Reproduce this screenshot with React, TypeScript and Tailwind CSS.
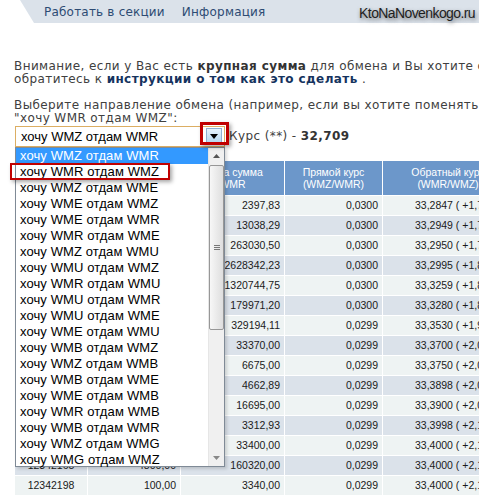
import React from "react";

const options: [string, string][] = [
  ["WMZ", "WMR"], ["WMR", "WMZ"], ["WMZ", "WME"], ["WME", "WMZ"], ["WME", "WMR"],
  ["WMR", "WME"], ["WMZ", "WMU"], ["WMU", "WMZ"], ["WMR", "WMU"], ["WMU", "WMR"],
  ["WMU", "WME"], ["WME", "WMU"], ["WMB", "WMZ"], ["WMZ", "WMB"], ["WMB", "WME"],
  ["WME", "WMB"], ["WMR", "WMB"], ["WMB", "WMR"], ["WMZ", "WMG"], ["WMG", "WMZ"],
];

const rows: string[][] = [
  ["12341587", "72,04", "2397,83", "0,0300", "33,2847 ( +1,76% )"],
  ["12341702", "391,60", "13038,29", "0,0300", "33,2949 ( +1,79% )"],
  ["12341734", "7900,00", "263030,50", "0,0300", "33,2950 ( +1,79% )"],
  ["12341790", "78930,39", "2628342,23", "0,0300", "33,2995 ( +1,80% )"],
  ["12341811", "39631,00", "1320744,75", "0,0300", "33,3259 ( +1,89% )"],
  ["12341856", "5400,00", "179971,20", "0,0300", "33,3280 ( +1,89% )"],
  ["12341903", "9870,00", "329194,11", "0,0299", "33,3530 ( +1,97% )"],
  ["12341955", "1000,00", "33370,00", "0,0299", "33,3700 ( +2,02% )"],
  ["12341987", "200,00", "6675,00", "0,0299", "33,3750 ( +2,04% )"],
  ["12342012", "139,65", "4662,89", "0,0299", "33,3898 ( +2,08% )"],
  ["12342046", "500,00", "16695,00", "0,0299", "33,3900 ( +2,08% )"],
  ["12342090", "99,19", "3312,93", "0,0299", "33,3998 ( +2,11% )"],
  ["12342131", "1000,00", "33400,00", "0,0299", "33,4000 ( +2,11% )"],
  ["12342165", "4800,00", "160320,00", "0,0299", "33,4000 ( +2,11% )"],
  ["12342198", "100,00", "3340,00", "0,0299", "33,4000 ( +2,11% )"],
];

const headers = [
  ["№", "заявки"],
  ["Сумма", "WMZ"],
  ["Ваша сумма", "WMR"],
  ["Прямой курс", "(WMZ/WMR)"],
  ["Обратный курс", "(WMR/WMZ)"],
];

export default function App() {
  return (
    <div className="relative w-[479px] h-[496px] overflow-hidden bg-white">
      {/* top navigation */}
      <div className="ml-[20px] h-[23px] bg-[#dbe2ea] [clip-path:polygon(0_0,100%_0,100%_100%,14px_100%)] flex items-center gap-[17px] pl-[24px] font-['DejaVu_Sans',sans-serif] text-[12px] tracking-[0.2px] text-[#2d4b73]">
        <span>Работать в секции</span>
        <span>Информация</span>
      </div>

      {/* watermark */}
      <div className="absolute top-[3px] right-[4px] font-['Liberation_Sans',sans-serif] text-[14px] tracking-[-0.6px] text-[#1e1e1e] [text-shadow:1px_2px_4px_rgba(0,0,0,0.55)]">
        KtoNaNovenkogo.ru
      </div>

      {/* text block */}
      <div className="mt-[37px] pl-[14px] font-['DejaVu_Sans',sans-serif] text-[12px] leading-[13px] tracking-[0.4px] text-[#404040]">
        <div className="whitespace-nowrap">
          Внимание, если у Вас есть <b className="text-[#333]">крупная сумма</b> для обмена и Вы хотите обменять её по лучшему курсу,
        </div>
        <div className="whitespace-nowrap">
          обратитесь к <b className="text-[#15335e]">инструкции о том как это сделать</b> .
        </div>
        <div className="mt-[13px] whitespace-nowrap">
          Выберите направление обмена (например, если вы хотите поменять к примеру WMR на WMZ, выберите
        </div>
        <div className="whitespace-nowrap">"хочу WMR отдам WMZ":</div>

        <div className="mt-[1px] flex items-center h-[21px]">
          <div className="ml-[1px] w-[210px] h-[21px] border border-[#dcae63] flex items-center justify-between pl-[5px] pr-[2px] font-['Liberation_Sans',sans-serif] text-[13px] tracking-normal text-black">
            <span>хочу WMZ отдам WMR</span>
            <div className="w-[16px] h-[17px] border border-[#8fb0d2] bg-gradient-to-b from-[#e6f3fc] to-[#b0d4ee] flex items-center justify-center">
              <svg width="8" height="5" viewBox="0 0 8 5">
                <path d="M0 0 L8 0 L4 5 Z" fill="#000" />
              </svg>
            </div>
          </div>
          <span className="ml-[4px] whitespace-nowrap">
            Курс (**) - <b className="text-[#333]">32,709</b>
          </span>
        </div>
      </div>

      {/* table */}
      <div className="mt-[14px] ml-[15px] grid grid-cols-[72px_92px_103px_97px_130px] gap-px bg-white w-max font-['Liberation_Sans',sans-serif] text-[10.5px] text-[#1a1a1a]">
        {headers.map((h, i) => (
          <div key={i} className="h-[34px] bg-[#6c97ca] text-white flex flex-col items-center justify-center text-center leading-[12px]">
            <span>{h[0]}</span>
            <span>{h[1]}</span>
          </div>
        ))}
        {rows.map((r, ri) => {
          const bg = ri % 2 === 0 ? "bg-[#eef3f3]" : "bg-[#dbe2ea]";
          return (
            <React.Fragment key={ri}>
              <div className={`h-[19px] ${bg} flex items-center justify-center`}>{r[0]}</div>
              <div className={`h-[19px] ${bg} flex items-center justify-end pr-[4px]`}>{r[1]}</div>
              <div className={`h-[19px] ${bg} flex items-center justify-end pr-[4px]`}>{r[2]}</div>
              <div className={`h-[19px] ${bg} flex items-center justify-end pr-[4px]`}>{r[3]}</div>
              <div className={`h-[19px] ${bg} flex items-center pl-[32px] whitespace-nowrap`}>{r[4]}</div>
            </React.Fragment>
          );
        })}
      </div>

      {/* open dropdown list */}
      <div className="absolute left-[15px] top-[147px] w-[210px] h-[320px] border border-[#7f8a96] bg-white flex shadow-[2px_2px_3px_rgba(0,0,0,0.15)]">
        <div className="w-[192px] font-['Liberation_Sans',sans-serif] text-[13px] tracking-[0.1px] text-black">
          {options.map(([a, b], i) => (
            <div
              key={i}
              className={`h-[16px] leading-[16px] pl-[4px] whitespace-nowrap ${i === 0 ? "bg-[#3399ff] text-white" : ""}`}
            >
              хочу {a} отдам {b}
            </div>
          ))}
        </div>
        <div className="w-[16px] flex flex-col bg-[#f0f0f0] border-l border-[#e6e6e6]">
          <div className="h-[16px] flex items-center justify-center">
            <svg width="7" height="4" viewBox="0 0 7 4">
              <path d="M0 4 L7 4 L3.5 0 Z" fill="#555" />
            </svg>
          </div>
          <div className="mt-[1px] h-[165px] rounded-[2px] border border-[#979797] bg-gradient-to-r from-[#f7f7f7] to-[#dedede] flex items-center justify-center">
            <div className="flex flex-col gap-[1px]">
              <div className="w-[6px] h-px bg-[#777]" />
              <div className="w-[6px] h-px bg-[#777]" />
              <div className="w-[6px] h-px bg-[#777]" />
            </div>
          </div>
          <div className="flex-1" />
          <div className="h-[16px] flex items-center justify-center">
            <svg width="7" height="4" viewBox="0 0 7 4">
              <path d="M0 0 L7 0 L3.5 4 Z" fill="#888" />
            </svg>
          </div>
        </div>
      </div>

      {/* red highlight boxes */}
      <div className="absolute left-[200px] top-[122px] w-[29px] h-[23px] border-[3px] border-[#c00000] shadow-[2px_2px_4px_rgba(0,0,0,0.35)]" />
      <div className="absolute left-[10px] top-[163px] w-[160px] h-[17px] border-[2px] border-[#c00000] shadow-[2px_2px_4px_rgba(0,0,0,0.35)]" />
    </div>
  );
}
